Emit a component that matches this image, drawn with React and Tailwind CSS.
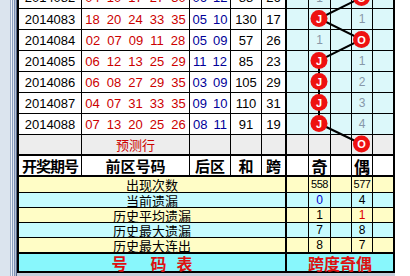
import React from 'react';

const ROWS = [
  { id: '2014082', front: ['04', '10', '17', '27', '30'], back: ['06', '12'], sum: 88, span: 26, odd: '1', even: '' },
  { id: '2014083', front: ['18', '20', '24', '33', '35'], back: ['05', '10'], sum: 130, span: 17, odd: '', even: '1' },
  { id: '2014084', front: ['02', '07', '09', '11', '28'], back: ['05', '09'], sum: 57, span: 26, odd: '1', even: '' },
  { id: '2014085', front: ['06', '12', '13', '25', '29'], back: ['11', '12'], sum: 85, span: 23, odd: '', even: '1' },
  { id: '2014086', front: ['06', '08', '27', '29', '35'], back: ['03', '09'], sum: 105, span: 29, odd: '', even: '2' },
  { id: '2014087', front: ['04', '07', '31', '33', '35'], back: ['09', '10'], sum: 110, span: 31, odd: '', even: '3' },
  { id: '2014088', front: ['07', '13', '20', '25', '26'], back: ['08', '11'], sum: 91, span: 19, odd: '', even: '4' },
];

const STATS = [
  { label: '出现次数', odd: '558', even: '577', bg: 'bg-[#fffdc6]', small: true },
  { label: '当前遗漏', odd: '0', even: '4', bg: 'bg-[#c6fbfe]', oddColor: 'text-[#0000cc]' },
  { label: '历史平均遗漏', odd: '1', even: '1', bg: 'bg-[#fffdc6]', evenColor: 'text-[#dd0000]' },
  { label: '历史最大遗漏', odd: '7', even: '8', bg: 'bg-[#c6fbfe]' },
  { label: '历史最大连出', odd: '8', even: '7', bg: 'bg-[#fffdc6]' },
];

// chart points in page coordinates
const ODD_X = 319;
const EVEN_X = 361.5;
const NODES = [
  { x: EVEN_X, y: -2.5, t: 'O' },
  { x: ODD_X, y: 18.5, t: 'J' },
  { x: EVEN_X, y: 39.5, t: 'O' },
  { x: ODD_X, y: 60.5, t: 'J' },
  { x: ODD_X, y: 81.5, t: 'J' },
  { x: ODD_X, y: 102.5, t: 'J' },
  { x: ODD_X, y: 123.5, t: 'J' },
  { x: EVEN_X, y: 144, t: 'O' },
];

const ChartCells = ({ bg, a = '', b = '', c = '', d = '', e = '', cls = '' }) => (
  <div className={`flex w-[108px] border-l-2 border-black ${bg}`}>
    <div className={`w-[21px] flex items-center justify-center ${cls}`}>{a}</div>
    <div className={`w-[22px] border-l border-black flex items-center justify-center ${cls}`}>{b}</div>
    <div className={`w-[21px] border-l border-black flex items-center justify-center ${cls}`}>{c}</div>
    <div className={`w-[21px] border-l border-black flex items-center justify-center ${cls}`}>{d}</div>
    <div className={`w-[21px] border-l border-black flex items-center justify-center ${cls}`}>{e}</div>
  </div>
);

const DataRow = ({ r, first }) => (
  <div className={`flex h-[21px] text-[13px] leading-none font-['Liberation_Sans',sans-serif] ${first ? '' : 'border-t border-black'}`}>
    <div className="w-[62px] flex items-center justify-center text-black bg-white">{r.id}</div>
    <div className="w-[108px] border-l border-black flex items-center justify-center gap-[7px] text-[#cc0000] bg-white">
      {r.front.map((n, i) => <span key={i}>{n}</span>)}
    </div>
    <div className="w-[41px] border-l border-black flex items-center justify-center gap-[6px] text-[#000099] bg-white">
      {r.back.map((n, i) => <span key={i}>{n}</span>)}
    </div>
    <div className="w-[31px] border-l border-black flex items-center justify-center bg-white">{r.sum}</div>
    <div className="w-[24px] border-l border-black flex items-center justify-center bg-white">{r.span}</div>
    <ChartCells bg="bg-[#dcf8fa]" b={r.odd} d={r.even} cls="text-[12px] text-[#8797a8]" />
  </div>
);

export default function App() {
  return (
    <div className="relative flex w-[410px] h-[276px] overflow-hidden bg-white">
      {/* window frame on the left */}
      <div className="flex h-full w-[17px]">
        <div className="w-[10px] bg-[#dbe4ee]" />
        <div className="w-px bg-[#9eaec8]" />
        <div className="w-px bg-[#eef2f8]" />
        <div className="w-px bg-[#8a9dbf]" />
        <div className="w-px bg-[#dde4ee]" />
        <div className="w-px bg-[#7b8fb4]" />
        <div className="w-px bg-[#b7c3d6]" />
        <div className="w-px bg-[#55668a]" />
      </div>

      <div className="flex flex-col w-[378px]">
        <div className="-mt-[13px] border-x-2 border-b-2 border-black">
          {ROWS.map((r, i) => <DataRow key={r.id} r={r} first={i === 0} />)}

          {/* prediction row */}
          <div className="flex h-[20px] border-t border-black bg-[#ededed] text-[13px] leading-none font-['Noto_Sans_CJK_SC',sans-serif]">
            <div className="w-[62px]" />
            <div className="w-[108px] border-l border-black flex items-center justify-center text-[#cc0000]">预测行</div>
            <div className="w-[41px] border-l border-black" />
            <div className="w-[31px] border-l border-black" />
            <div className="w-[24px] border-l border-black" />
            <ChartCells bg="bg-[#ededed]" />
          </div>

          {/* header */}
          <div className="flex h-[23px] border-y-2 border-black bg-white text-[15px] font-bold leading-none text-black font-['Noto_Sans_CJK_SC',sans-serif]">
            <div className="w-[62px] flex items-center justify-center tracking-[-1px]">开奖期号</div>
            <div className="w-[108px] border-l border-black flex items-center justify-center">前区号码</div>
            <div className="w-[41px] border-l border-black flex items-center justify-center">后区</div>
            <div className="w-[31px] border-l border-black flex items-center justify-center">和</div>
            <div className="w-[24px] border-l border-black flex items-center justify-center">跨</div>
            <ChartCells bg="bg-white" b="奇" d="偶" cls="text-[16px]" />
          </div>

          {/* statistics */}
          {STATS.map((s, i) => (
            <div key={s.label} className={`flex h-[15px] ${i === 0 ? '' : 'border-t border-black'} ${s.bg}`}>
              <div className="w-[266px] flex items-center justify-center text-[13px] leading-none text-black font-['Noto_Sans_CJK_SC',sans-serif]">{s.label}</div>
              <div className="flex w-[108px] border-l-2 border-black text-[12px] leading-none font-['Liberation_Sans',sans-serif]">
                <div className="w-[21px]" />
                <div className={`w-[22px] border-l border-black flex items-center justify-center ${s.oddColor || 'text-black'} ${s.small ? 'text-[11px] tracking-[-0.5px]' : ''}`}>{s.odd}</div>
                <div className="w-[21px] border-l border-black" />
                <div className={`w-[21px] border-l border-black flex items-center justify-center ${s.evenColor || 'text-black'} ${s.small ? 'text-[11px] tracking-[-0.5px]' : ''}`}>{s.even}</div>
                <div className="w-[21px] border-l border-black" />
              </div>
            </div>
          ))}

          {/* footer titles */}
          <div className="flex h-[19px] border-t-2 border-black bg-[#88f7fc] text-[16px] font-bold leading-none text-[#dd1111] font-['Noto_Sans_CJK_SC',sans-serif]">
            <div className="w-[266px] flex items-center justify-center">
              <span className="mr-[23px]">号</span>
              <span className="mr-[10px]">码</span>
              <span>表</span>
            </div>
            <div className="w-[108px] border-l-2 border-black flex items-center justify-center">跨度奇偶</div>
          </div>
        </div>
        <div className="h-[3px] bg-[#c5cedb]" />
      </div>

      <div className="flex-1 bg-white" />

      {/* odd/even span chart */}
      <svg className="absolute left-0 top-0 pointer-events-none" width="410" height="160">
        <polyline
          points={NODES.map((n) => `${n.x},${n.y}`).join(' ')}
          fill="none"
          stroke="#000"
          strokeWidth="2"
        />
        {NODES.map((n, i) => (
          <g key={i}>
            <circle cx={n.x} cy={n.y} r="8.5" fill="#ee1111" />
            <text
              x={n.x}
              y={n.y + 4}
              textAnchor="middle"
              fontSize="11"
              fontWeight="bold"
              fill="#fff"
              fontFamily="Liberation Sans, sans-serif"
            >
              {n.t}
            </text>
          </g>
        ))}
      </svg>
    </div>
  );
}
